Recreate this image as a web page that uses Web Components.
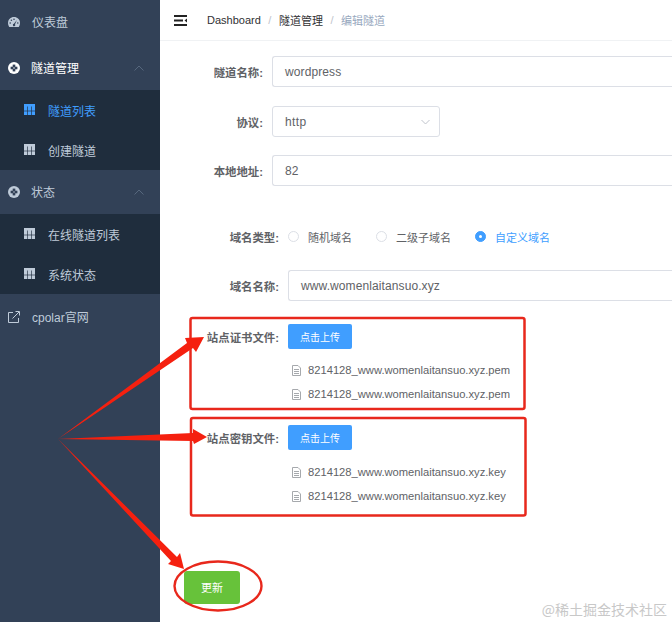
<!doctype html>
<html lang="zh">
<head>
<meta charset="utf-8">
<title>编辑隧道</title>
<style>
    html, body { margin: 0; padding: 0; height: 100%; overflow: hidden; }
    body { font-family: "Liberation Sans", "Noto Sans CJK SC", sans-serif; font-size: 12px; background: #fff; }
</style>
</head>
<body>
<app-shell>
    <side-bar slot="side">
        <nav-item icon="gauge" style="--h:46px;padding-bottom:2px">仪表盘</nav-item>
        <nav-item icon="ring" open active>隧道管理</nav-item>
        <sub-menu>
            <sub-item active>隧道列表</sub-item>
            <sub-item>创建隧道</sub-item>
        </sub-menu>
        <nav-item icon="ring" open>状态</nav-item>
        <sub-menu>
            <sub-item>在线隧道列表</sub-item>
            <sub-item>系统状态</sub-item>
        </sub-menu>
        <nav-item icon="link" style="--h:46px">cpolar官网</nav-item>
    </side-bar>
    <top-bar slot="top"></top-bar>

    <form-row label="隧道名称:" style="--top:15px;--lw:112px"><text-field>wordpress</text-field></form-row>
    <form-row label="协议:" style="--top:19px;--lw:112px"><select-field>http</select-field></form-row>
    <form-row label="本地地址:" style="--top:18px;--lw:112px"><text-field>82</text-field></form-row>
    <form-row label="域名类型:" style="--top:35px;--lw:128px;--h:31px">
        <radio-group>
            <radio-item>随机域名</radio-item>
            <radio-item>二级子域名</radio-item>
            <radio-item checked>自定义域名</radio-item>
        </radio-group>
    </form-row>
    <form-row label="域名名称:" style="--top:18px;--lw:128px"><text-field>www.womenlaitansuo.xyz</text-field></form-row>
    <upload-block label="站点证书文件:" style="--top:23px">
        <file-item>8214128_www.womenlaitansuo.xyz.pem</file-item>
        <file-item>8214128_www.womenlaitansuo.xyz.pem</file-item>
    </upload-block>
    <upload-block label="站点密钥文件:" style="--top:19px;--files:10px">
        <file-item>8214128_www.womenlaitansuo.xyz.key</file-item>
        <file-item>8214128_www.womenlaitansuo.xyz.key</file-item>
    </upload-block>
    <save-button>更新</save-button>

    <mark-up slot="over"></mark-up>
</app-shell>

<script>
    const define_shadow = (name, html, extra) => {
        customElements.define(name, class extends HTMLElement {
            constructor() {
                super();
                this.attachShadow({ mode: "open" }).innerHTML = html;
                if (extra) extra(this);
            }
        });
    };

    const icons = {
        gauge: `<svg width="12" height="10" viewBox="0 0 12 10"><path fill="currentColor" d="M6 0C2.700 0 0 2.600 0 5.900c0 1.400.4 2.800 1.200 4h9.600c.8-1.200 1.200-2.600 1.200-4C12 2.600 9.300 0 6 0z"/><g fill="#324157"><circle cx="2.200" cy="6" r=".8"/><circle cx="3.400" cy="3.200" r=".8"/><circle cx="6" cy="2.200" r=".8"/><circle cx="9.800" cy="6" r=".8"/><path d="M8.900 2.900 7 7.200a1.200 1.200 0 1 1-1.100-.4z"/></g></svg>`,
        ring: `<svg width="12" height="12" viewBox="0 0 12 12"><circle cx="6" cy="6" r="6" fill="currentColor"/><rect x="2.600" y="4.700" width="6.800" height="2.600" fill="#324157"/><rect x="4.700" y="2.600" width="2.600" height="6.800" fill="#324157"/><circle cx="6" cy="6" r=".9" fill="currentColor" opacity=".6"/></svg>`,
        link: `<svg width="12" height="12" viewBox="0 0 12 12" fill="none" stroke="currentColor"><path d="M5 1.500H.5v10h10V7"/><path d="M4.500 7.500 11 1M7.500.5h4v4"/></svg>`
    };

    define_shadow("app-shell", `
        <style>
            :host { display: grid; grid-template-columns: 160px 1fr; grid-template-rows: 41px 1fr; width: 672px; height: 622px; position: relative; overflow: hidden; }
            .side { grid-row: 1 / 3; display: block; background: #324157; }
            .main { min-width: 0; display: flex; flex-direction: column; }
        </style>
        <div class="side"><slot name="side"></slot></div>
        <div><slot name="top"></slot></div>
        <div class="main"><slot></slot></div>
        <slot name="over"></slot>
    `);

    define_shadow("side-bar", `
        <style>
            :host { display: block; color: #bfcbd9; }
        </style>
        <slot></slot>
    `);

    define_shadow("nav-item", `
        <style>
            :host { display: flex; align-items: center; height: var(--h, 44px); padding-left: 8px; font-size: 12px; color: #bfcbd9; box-sizing: border-box; }
            :host([active]) { color: #fff; }
            .icon { width: 12px; height: 12px; display: flex; align-items: center; justify-content: center; margin-right: 12px; }
            :host([open]) .icon { margin-right: 11px; }
            .text { flex: 1; margin-bottom: 1px; }
            .arrow { margin-right: 16px; display: none; }
            :host([open]) .arrow { display: block; }
        </style>
        <span class="icon"></span>
        <span class="text"><slot></slot></span>
        <svg class="arrow" width="10" height="6" viewBox="0 0 10 6" fill="none" stroke="#56677d"><path d="M.5 5.500 5 1l4.500 4.500"/></svg>
    `, (el) => {
        el.shadowRoot.querySelector(".icon").innerHTML = icons[el.getAttribute("icon")] || "";
    });

    define_shadow("sub-menu", `
        <style>
            :host { display: block; background: #1f2d3d; }
        </style>
        <slot></slot>
    `);

    define_shadow("sub-item", `
        <style>
            :host { display: flex; align-items: center; height: 40px; padding-left: 24px; gap: 13px; font-size: 12px; color: #bfcbd9; }
            :host([active]) { color: #409eff; }
            svg { margin-top: -2px; }
        </style>
        <svg width="11" height="11" viewBox="0 0 11 11"><rect width="11" height="11" fill="currentColor"/><path d="M3.500 2.500V11M7.500 2.500V11M0 7h11" stroke="#1f2d3d" stroke-opacity=".65" fill="none"/></svg>
        <span><slot></slot></span>
    `);

    define_shadow("top-bar", `
        <style>
            :host { display: flex; align-items: center; height: 40px; border-bottom: 1px solid #f0f2f4; font-size: 11px; box-sizing: content-box; }
            svg { margin-left: 14px; margin-right: 20px; }
            .crumb { color: #303133; }
            .sep { color: #c0c4cc; margin: 0 7.500px; }
            .last { color: #97a8be; }
        </style>
        <svg width="13" height="11" viewBox="0 0 13 11" fill="#222"><rect width="13" height="2" y="0"/><rect width="9" height="2" y="4.500"/><rect width="13" height="2" y="9"/><path d="M13 3.500v4L10.500 5.500z"/></svg>
        <span class="crumb">Dashboard</span><span class="sep">/</span>
        <span class="crumb">隧道管理</span><span class="sep">/</span>
        <span class="last">编辑隧道</span>
    `);

    define_shadow("form-row", `
        <style>
            :host { display: flex; align-items: center; margin-top: var(--top, 18px); min-height: var(--h, 31px); }
            .label { width: var(--lw); box-sizing: border-box; padding-right: 9px; text-align: right; font-size: 11.400px; font-weight: 700; color: #606266; flex: none; white-space: nowrap; }
            .ctl { flex: 1; min-width: 0; }
        </style>
        <span class="label"></span>
        <div class="ctl"><slot></slot></div>
    `, (el) => {
        el.shadowRoot.querySelector(".label").textContent = el.getAttribute("label");
    });

    define_shadow("text-field", `
        <style>
            :host { display: block; height: 31px; box-sizing: border-box; border: 1px solid #dcdfe6; border-right: 0; border-radius: 3px 0 0 3px; padding: 0 12px; line-height: 30px; font-size: 12px; letter-spacing: .1px; color: #606266; white-space: nowrap; }
        </style>
        <slot></slot>
    `);

    define_shadow("select-field", `
        <style>
            :host { display: flex; align-items: center; justify-content: space-between; width: 168px; height: 31px; box-sizing: border-box; border: 1px solid #dcdfe6; border-radius: 3px; padding: 0 9px 0 12px; font-size: 12px; letter-spacing: .35px; color: #606266; }
        </style>
        <span><slot></slot></span>
        <svg width="9" height="6" viewBox="0 0 9 6" fill="none" stroke="#c0c4cc"><path d="M.5 1 4.500 5l4-4"/></svg>
    `);

    define_shadow("radio-group", `
        <style>
            :host { display: flex; gap: 24px; }
        </style>
        <slot></slot>
    `);

    define_shadow("radio-item", `
        <style>
            :host { display: flex; align-items: center; gap: 9px; font-size: 11px; color: #606266; }
            :host([checked]) { color: #409eff; }
            i { width: 9px; height: 9px; border: 1px solid #dcdfe6; border-radius: 50%; display: block; box-sizing: content-box; position: relative; }
            :host([checked]) i { background: #409eff; border-color: #409eff; }
            :host([checked]) i::after { content: ""; position: absolute; left: 3px; top: 3px; width: 3px; height: 3px; border-radius: 50%; background: #fff; }
        </style>
        <i></i>
        <span><slot></slot></span>
    `);

    define_shadow("upload-block", `
        <style>
            :host { display: grid; grid-template-columns: 128px auto; margin-top: var(--top, 23px); }
            .label { align-self: center; padding-right: 9px; text-align: right; font-size: 11.400px; font-weight: 700; color: #606266; white-space: nowrap; }
            button { all: unset; box-sizing: border-box; display: block; width: 64px; height: 25px; text-align: center; line-height: 27px; font-size: 10px; font-family: inherit; color: #fff; background: #409eff; border-radius: 2px; }
            .files { grid-column: 2; margin-top: var(--files, 9px); }
        </style>
        <span class="label"></span>
        <div><button>点击上传</button></div>
        <div class="files"><slot></slot></div>
    `, (el) => {
        el.shadowRoot.querySelector(".label").textContent = el.getAttribute("label");
    });

    define_shadow("file-item", `
        <style>
            :host { display: flex; align-items: center; height: 24px; padding-left: 4px; gap: 7px; font-size: 11.200px; color: #606266; white-space: nowrap; }
        </style>
        <svg width="9" height="11" viewBox="0 0 9 11" fill="none" stroke="#a6a9ad"><path d="M.5.500h5.500l2.500 2.500v7.500h-8zM2 4.500h5M2 6.500h5M2 8.500h5"/></svg>
        <span><slot></slot></span>
    `);

    define_shadow("save-button", `
        <style>
            :host { display: block; margin: 63px 0 0 24px; }
            button { all: unset; display: block; box-sizing: border-box; width: 56px; height: 33px; text-align: center; line-height: 35px; font-size: 11px; font-family: inherit; color: #fff; background: #67c23a; border-radius: 3px; }
        </style>
        <button><slot></slot></button>
    `);

    // the red annotations drawn on top of the screenshot, plus the watermark
    define_shadow("mark-up", `
        <style>
            :host { position: absolute; inset: 0; pointer-events: none; }
            svg { position: absolute; left: 0; top: 0; }
            .wm { position: absolute; right: 5px; bottom: 3px; font-size: 14px; color: #c8c8c8; font-family: "Noto Sans CJK SC", sans-serif; }
        </style>
        <svg width="672" height="622" viewBox="0 0 672 622" fill="none">
            <rect x="190.500" y="318" width="334" height="91" rx="2" stroke="#e8281c" stroke-width="2.500"/>
            <rect x="191" y="418" width="334.500" height="97.500" rx="2" stroke="#e8281c" stroke-width="2.500"/>
            <path fill="#f5200f" d="M58 439 187 343 185 338 204 337 196 352 193 348z"/>
            <path fill="#f5200f" d="M58 439 193 433 193 429 207 437 194 444 193 441z"/>
            <path fill="#f5200f" d="M58 439 177 557 180 553 184 569 168 564 171 561z"/>
            <ellipse cx="218" cy="586" rx="43.500" ry="24.500" stroke="#e8281c" stroke-width="2.400"/>
        </svg>
        <span class="wm">@稀土掘金技术社区</span>
    `);
</script>
</body>
</html>
